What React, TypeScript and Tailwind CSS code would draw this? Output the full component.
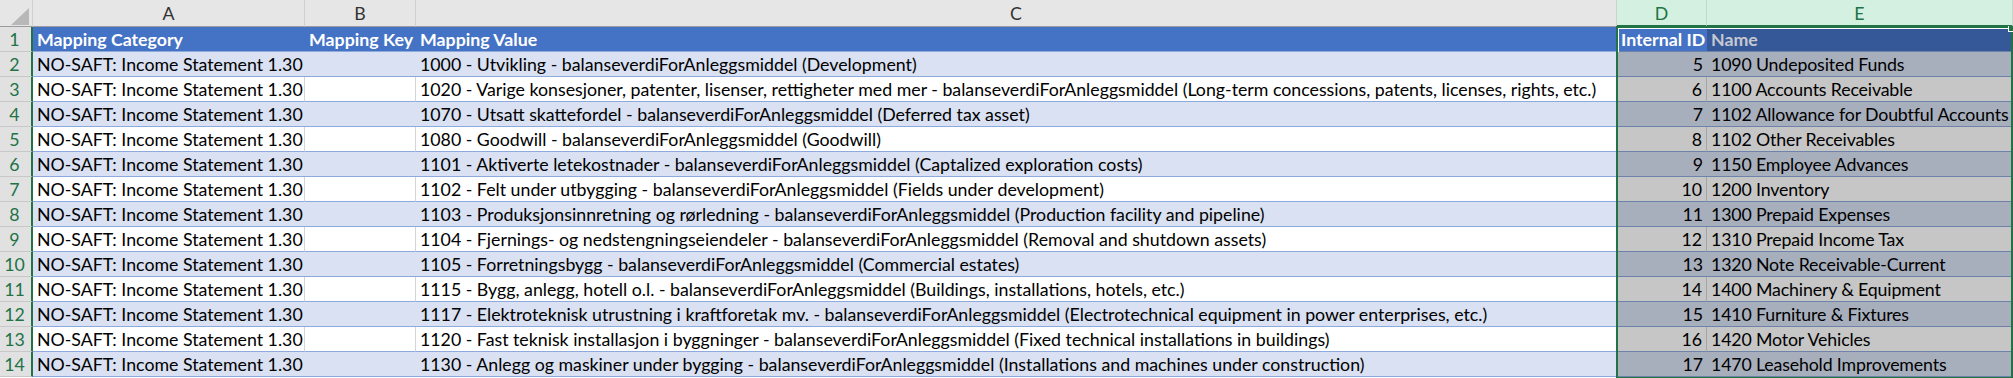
import type {ReactNode} from 'react';

// Excel-style sheet: a mapping table (A:C) next to a selected lookup range (D:E).
const GRID = 'grid grid-cols-[33px_272px_111px_1201px_90px_306px]';

const values = [
  '1000 - Utvikling - balanseverdiForAnleggsmiddel (Development)',
  '1020 - Varige konsesjoner, patenter, lisenser, rettigheter med mer - balanseverdiForAnleggsmiddel (Long-term concessions, patents, licenses, rights, etc.)',
  '1070 - Utsatt skattefordel - balanseverdiForAnleggsmiddel (Deferred tax asset)',
  '1080 - Goodwill - balanseverdiForAnleggsmiddel (Goodwill)',
  '1101 - Aktiverte letekostnader - balanseverdiForAnleggsmiddel (Captalized exploration costs)',
  '1102 - Felt under utbygging - balanseverdiForAnleggsmiddel (Fields under development)',
  '1103 - Produksjonsinnretning og rørledning - balanseverdiForAnleggsmiddel (Production facility and pipeline)',
  '1104 - Fjernings- og nedstengningseiendeler - balanseverdiForAnleggsmiddel (Removal and shutdown assets)',
  '1105 - Forretningsbygg - balanseverdiForAnleggsmiddel (Commercial estates)',
  '1115 - Bygg, anlegg, hotell o.l. - balanseverdiForAnleggsmiddel (Buildings, installations, hotels, etc.)',
  '1117 - Elektroteknisk utrustning i kraftforetak mv. - balanseverdiForAnleggsmiddel (Electrotechnical equipment in power enterprises, etc.)',
  '1120 - Fast teknisk installasjon i byggninger - balanseverdiForAnleggsmiddel (Fixed technical installations in buildings)',
  '1130 - Anlegg og maskiner under bygging - balanseverdiForAnleggsmiddel (Installations and machines under construction)',
];

const accounts: [number, string][] = [
  [5, '1090 Undeposited Funds'],
  [6, '1100 Accounts Receivable'],
  [7, '1102 Allowance for Doubtful Accounts'],
  [8, '1102 Other Receivables'],
  [9, '1150 Employee Advances'],
  [10, '1200 Inventory'],
  [11, '1300 Prepaid Expenses'],
  [12, '1310 Prepaid Income Tax'],
  [13, '1320 Note Receivable-Current'],
  [14, '1400 Machinery & Equipment'],
  [15, '1410 Furniture & Fixtures'],
  [16, '1420 Motor Vehicles'],
  [17, '1470 Leasehold Improvements'],
];

function ColHead({label, selected}: {label: string; selected?: boolean}) {
  return (
    <div
      className={
        selected
          ? 'flex h-[27px] items-center justify-center border-r border-b-2 border-r-[#c4d8cc] border-b-[#217346] bg-[#d3f0e0] pt-[2px] text-[#217346]'
          : 'flex h-[27px] items-center justify-center border-r border-b border-r-[#d0d0d0] border-b-[#9b9b9b] bg-[#e6e6e6] pt-[1px] text-[#333]'
      }
    >
      {label}
    </div>
  );
}

function RowHead({n}: {n: number}) {
  return (
    <div className="flex h-[25px] items-center justify-center border-r-2 border-b border-r-[#217346] border-b-[#c8c8c8] bg-[#e1e1e1] pr-[2px] text-[#217346]">
      {n}
    </div>
  );
}

function Cell({children, className, pad = 'px-[4px]'}: {children?: ReactNode; className: string; pad?: string}) {
  return (
    <div className={`flex h-[25px] items-center overflow-hidden whitespace-nowrap border-b ${pad} ${className}`}>
      {children}
    </div>
  );
}

function DataRow({row, value, id, name}: {row: number; value: string; id: number; name: string}) {
  const banded = row % 2 === 0;
  const plain = banded
    ? 'border-b-[#8ea9db] bg-[#d9e1f2]'
    : 'border-r border-b-[#8ea9db] border-r-[#d4d4d4] bg-white';
  const picked = banded
    ? 'border-b-[#6e83aa] bg-[#a8afbc]'
    : 'border-b-[#6e83aa] bg-[#c6c6c6]';
  return (
    <>
      <RowHead n={row} />
      <Cell className={plain}>NO-SAFT: Income Statement 1.30</Cell>
      <Cell className={plain} />
      <Cell className={banded ? plain : 'border-b-[#8ea9db] bg-white'}>{value}</Cell>
      <Cell className={`justify-end ${picked} ${banded ? '' : 'border-r border-r-[#a5a5a5]'}`}>{id}</Cell>
      <Cell className={`tracking-[-0.15px] ${picked}`} pad="pl-[4px] pr-0">
        {name}
      </Cell>
    </>
  );
}

export default function App() {
  return (
    <div className="relative h-[378px] w-[2013px] overflow-hidden bg-white font-['Lato',sans-serif] text-[17.75px] text-black">
      <div className={GRID}>
        {/* column letters */}
        <div className="relative h-[27px] border-r border-b border-r-[#d0d0d0] border-b-[#9b9b9b] bg-[#e6e6e6]">
          <svg className="absolute left-[11px] top-[8px]" width="18" height="17" viewBox="0 0 18 17">
            <polygon points="0,17 18,17 18,0" fill="#b8b8b8" />
          </svg>
        </div>
        <ColHead label="A" />
        <ColHead label="B" />
        <ColHead label="C" />
        <ColHead label="D" selected />
        <ColHead label="E" selected />

        {/* table header row */}
        <RowHead n={1} />
        <Cell className="border-b-[#8ea9db] bg-[#4472c4] font-bold text-white">Mapping Category</Cell>
        <Cell className="border-b-[#8ea9db] bg-[#4472c4] font-bold text-white">Mapping Key</Cell>
        <Cell className="border-b-[#8ea9db] bg-[#4472c4] font-bold text-white">Mapping Value</Cell>
        <Cell className="border-b-[#6e83aa] bg-[#4472c4] font-bold text-white">Internal ID</Cell>
        <Cell className="border-b-[#6e83aa] bg-[#355898] font-bold text-[#c6c8d0]">Name</Cell>

        {values.map((v, i) => (
          <DataRow key={i} row={i + 2} value={v} id={accounts[i][0]} name={accounts[i][1]} />
        ))}
      </div>

      {/* selection D1:E14 */}
      <div className="pointer-events-none absolute left-[1616px] top-[26px] h-[353px] w-[397px] border-2 border-[#217346]">
        <div className="h-px w-full bg-white" />
        <div className="h-[23px] w-px bg-white" />
      </div>
      <div className="absolute right-0 top-[26px] h-[6px] w-[5px] border-b border-l border-white bg-[#217346]" />
    </div>
  );
}
